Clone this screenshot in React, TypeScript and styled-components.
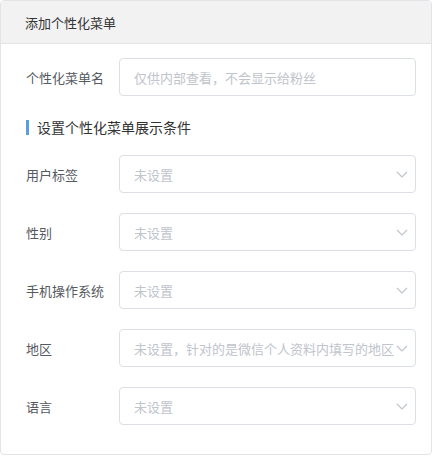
import React from "react";
import styled, { createGlobalStyle } from "styled-components";

const Global = createGlobalStyle`
  html, body { margin: 0; padding: 0; background: #fff; }
  body { font-family: "Noto Sans CJK SC", "Noto Sans", sans-serif; }
`;

const Page = styled.div`
  width: 442px;
  height: 465px;
  box-sizing: border-box;
  padding: 0 10px 10px 0;
`;

const Card = styled.div`
  height: 455px;
  box-sizing: border-box;
  border: 1px solid #e3e4e8;
  border-radius: 4px;
  overflow: hidden;
  display: flex;
  flex-direction: column;
`;

const Header = styled.div`
  height: 42px;
  background: #f2f2f2;
  border-bottom: 1px solid #e4e4e4;
  display: flex;
  align-items: center;
  padding-left: 24px;
  font-size: 13px;
  color: #333;
`;

const Body = styled.div`
  padding: 14px 15px 0 25px;
  display: flex;
  flex-direction: column;
`;

const Row = styled.div<{ $mt?: number }>`
  display: flex;
  align-items: center;
  margin-top: ${(p) => p.$mt ?? 0}px;
`;

const Label = styled.div`
  width: 93px;
  flex: none;
  font-size: 13px;
  color: #555a61;
`;

const Field = styled.div`
  flex: 1;
  height: 38px;
  box-sizing: border-box;
  border: 1px solid #dcdfe6;
  border-radius: 4px;
  display: flex;
  align-items: center;
  padding: 0 6px 0 14px;
  font-size: 13px;
  color: #c0c4cc;
  white-space: nowrap;
  overflow: hidden;
`;

const FieldText = styled.span`
  flex: 1;
  overflow: hidden;
`;

const SectionTitle = styled.div`
  margin-top: 21px;
  height: 20px;
  display: flex;
  align-items: center;
  font-size: 14px;
  color: #333;
`;

const Bar = styled.span`
  width: 3px;
  height: 15px;
  background: #5a9ee0;
  margin-right: 8px;
`;

const Chevron = () => (
  <svg width="14" height="14" viewBox="0 0 14 14" style={{ flex: "none" }}>
    <path d="M2 5 L7 10 L12 5" fill="none" stroke="#c0c4cc" strokeWidth="1.2" />
  </svg>
);

const selects = [
  { label: "用户标签", text: "未设置" },
  { label: "性别", text: "未设置" },
  { label: "手机操作系统", text: "未设置" },
  { label: "地区", text: "未设置，针对的是微信个人资料内填写的地区" },
  { label: "语言", text: "未设置" },
];

export default function App() {
  return (
    <Page>
      <Global />
      <Card>
        <Header>添加个性化菜单</Header>
        <Body>
          <Row>
            <Label>个性化菜单名</Label>
            <Field>
              <FieldText>仅供内部查看，不会显示给粉丝</FieldText>
            </Field>
          </Row>
          <SectionTitle>
            <Bar />
            设置个性化菜单展示条件
          </SectionTitle>
          {selects.map((s, i) => (
            <Row key={s.label} $mt={i === 0 ? 18 : 20}>
              <Label>{s.label}</Label>
              <Field>
                <FieldText>{s.text}</FieldText>
                <Chevron />
              </Field>
            </Row>
          ))}
        </Body>
      </Card>
    </Page>
  );
}
